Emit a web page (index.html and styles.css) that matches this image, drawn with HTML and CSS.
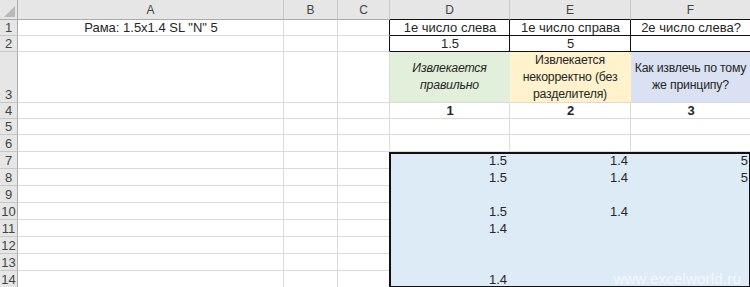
FILE: index.html
```html
<!DOCTYPE html>
<html lang="ru">
<head>
    <meta charset="UTF-8">
    <meta name="viewport" content="width=device-width, initial-scale=1.0">
    <title>Рама: разбор размеров</title>
    <link rel="stylesheet" href="styles.css">
</head>
<body>
    <div class="book">
    <div class="sheet">
        <!-- column headers -->
        <div class="corner"></div>
        <div class="ch">A</div>
        <div class="ch">B</div>
        <div class="ch">C</div>
        <div class="ch dark">D</div>
        <div class="ch dark">E</div>
        <div class="ch dark">F</div>

        <!-- row 1 -->
        <div class="rh">1</div>
        <div class="c center">Рама: 1.5x1.4 SL "N" 5</div>
        <div class="c"></div>
        <div class="c edge"></div>
        <div class="c center boxed">1е число слева</div>
        <div class="c center boxed">1е число справа</div>
        <div class="c center boxed">2е число слева?</div>

        <!-- row 2 -->
        <div class="rh">2</div>
        <div class="c"></div>
        <div class="c"></div>
        <div class="c edge"></div>
        <div class="c center boxed">1.5</div>
        <div class="c center boxed">5</div>
        <div class="c center boxed"></div>

        <!-- row 3 -->
        <div class="rh">3</div>
        <div class="c"></div>
        <div class="c"></div>
        <div class="c"></div>
        <div class="c wrap green"><em>Извлекается правильно</em></div>
        <div class="c wrap yellow">Извлекается некорректно (без разделителя)</div>
        <div class="c wrap lilac">Как извлечь по тому же принципу?</div>

        <!-- row 4 -->
        <div class="rh">4</div>
        <div class="c"></div>
        <div class="c"></div>
        <div class="c"></div>
        <div class="c center bold">1</div>
        <div class="c center bold">2</div>
        <div class="c center bold">3</div>

        <!-- rows 5-6 -->
        <div class="rh">5</div>
        <div class="c"></div><div class="c"></div><div class="c"></div>
        <div class="c"></div><div class="c"></div><div class="c"></div>

        <div class="rh">6</div>
        <div class="c"></div><div class="c"></div><div class="c"></div>
        <div class="c"></div><div class="c"></div><div class="c"></div>

        <!-- rows 7-14: results -->
        <div class="rh">7</div>
        <div class="c"></div><div class="c"></div><div class="c"></div>
        <div class="c num fill">1.5</div><div class="c num fill">1.4</div><div class="c num fill">5</div>

        <div class="rh">8</div>
        <div class="c"></div><div class="c"></div><div class="c"></div>
        <div class="c num fill">1.5</div><div class="c num fill">1.4</div><div class="c num fill">5</div>

        <div class="rh">9</div>
        <div class="c"></div><div class="c"></div><div class="c"></div>
        <div class="c num fill"></div><div class="c num fill"></div><div class="c num fill"></div>

        <div class="rh">10</div>
        <div class="c"></div><div class="c"></div><div class="c"></div>
        <div class="c num fill">1.5</div><div class="c num fill">1.4</div><div class="c num fill"></div>

        <div class="rh">11</div>
        <div class="c"></div><div class="c"></div><div class="c"></div>
        <div class="c num fill">1.4</div><div class="c num fill"></div><div class="c num fill"></div>

        <div class="rh">12</div>
        <div class="c"></div><div class="c"></div><div class="c"></div>
        <div class="c num fill"></div><div class="c num fill"></div><div class="c num fill"></div>

        <div class="rh">13</div>
        <div class="c"></div><div class="c"></div><div class="c"></div>
        <div class="c num fill"></div><div class="c num fill"></div><div class="c num fill"></div>

        <div class="rh">14</div>
        <div class="c"></div><div class="c"></div><div class="c"></div>
        <div class="c num fill">1.4</div><div class="c num fill"></div><div class="c num fill"></div>
    </div>

    <!-- same grid laid over the sheet: outline of D7:F14 and the site mark -->
    <div class="sheet overlay">
        <div class="frame"></div>
        <div class="watermark">www.excelworld.ru</div>
    </div>
    </div>
</body>
</html>
```

FILE: styles.css
```css
body {
    margin: 0;
    overflow: hidden;
    background: #fff;
}

.book {
    display: grid;
}

.sheet {
    grid-area: 1 / 1;
    display: grid;
    grid-template-columns: 18px 266px 54px 52px 120px 121px 120px;
    grid-template-rows: 20px 16px 16px 51px 16px 16px repeat(9, 17px);
    font-family: "Liberation Sans", Arial, sans-serif;
    font-size: 13px;
    color: #262626;
}

.sheet > div {
    box-sizing: border-box;
    min-width: 0;
}

.overlay {
    pointer-events: none;
}

/* headers */
.corner {
    background: #e6e6e6;
    border-right: 1px solid #ababab;
    border-bottom: 1px solid #ababab;
    position: relative;
}

.corner::after {
    content: "";
    position: absolute;
    right: 2px;
    bottom: 2px;
    border-left: 11px solid transparent;
    border-bottom: 11px solid #b8b8b8;
}

.ch {
    background: #e6e6e6;
    border-right: 1px solid #c8c8c8;
    border-bottom: 1px solid #ababab;
    color: #444;
    font-size: 12px;
    display: flex;
    align-items: center;
    justify-content: center;
    padding-top: 1px;
}

.ch.dark { border-bottom-color: #111; }

.rh {
    background: #e6e6e6;
    border-right: 1px solid #ababab;
    border-bottom: 1px solid #c8c8c8;
    color: #444;
    display: flex;
    align-items: flex-end;
    justify-content: center;
    line-height: 15px;
}

/* cells */
.c {
    border-right: 1px solid #dadada;
    border-bottom: 1px solid #dadada;
    display: flex;
    align-items: flex-end;
    padding: 0 2px 0 3px;
    white-space: nowrap;
    overflow: hidden;
    line-height: 15px;
}

.center { justify-content: center; }
.num { justify-content: flex-end; }
.bold { font-weight: bold; }

.edge { border-right-color: #111; }
.boxed { border-color: #111; }

.wrap {
    white-space: normal;
    text-align: center;
    align-items: center;
    justify-content: center;
    font-size: 12.3px;
    line-height: 17px;
    padding: 0;
    letter-spacing: -0.2px;
}

.green { background: #e2efda; border-color: #e2efda #e2efda #dadada; }
.yellow { background: #fff2cc; border-color: #fff2cc #fff2cc #dadada; }
.lilac { background: #d9e1f2; border-color: #d9e1f2 #d9e1f2 #dadada; }

.fill {
    background: #ddebf7;
    border-color: #ddebf7;
}

.frame {
    grid-column: 5 / 8;
    grid-row: 8 / 16;
    margin-left: -1px;
    border: 2px solid #111;
}

.watermark {
    grid-column: 6 / 8;
    grid-row: 15;
    justify-self: end;
    align-self: end;
    margin: 0 10px 1px 0;
    font-size: 15px;
    line-height: 17px;
    color: rgba(255, 255, 255, 0.65);
    letter-spacing: 0.2px;
}
```
